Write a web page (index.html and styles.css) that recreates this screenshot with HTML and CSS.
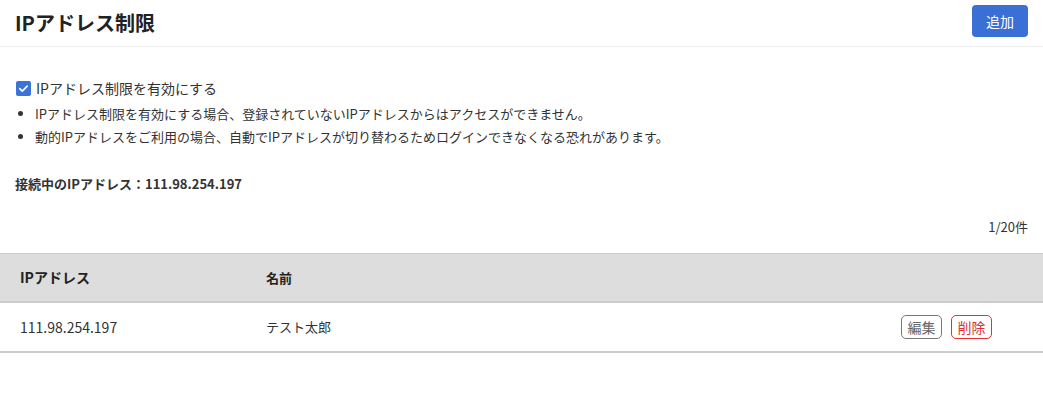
FILE: index.html
```html
<!DOCTYPE html>
<html lang="ja">
<head>
<meta charset="utf-8">
<link rel="stylesheet" href="styles.css">
</head>
<body>
<header class="page-header">
  <h1 class="title">IPアドレス制限</h1>
  <button class="btn-primary">追加</button>
</header>
<section class="settings">
  <label class="check">
    <span class="checkbox"><svg viewBox="0 0 16 16" width="15" height="15"><path d="M4 8.2l2.7 2.6L12 5.4" fill="none" stroke="#fff" stroke-width="1.8" stroke-linecap="round" stroke-linejoin="round"/></svg></span>
    <span>IPアドレス制限を有効にする</span>
  </label>
  <ul class="notes">
    <li>IPアドレス制限を有効にする場合、登録されていないIPアドレスからはアクセスができません。</li>
    <li>動的IPアドレスをご利用の場合、自動でIPアドレスが切り替わるためログインできなくなる恐れがあります。</li>
  </ul>
  <p class="current">接続中のIPアドレス：111.98.254.197</p>
  <div class="count">1/20件</div>
</section>
<table class="list">
  <thead>
    <tr><th class="c-ip">IPアドレス</th><th class="c-name">名前</th><th class="c-act"></th></tr>
  </thead>
  <tbody>
    <tr>
      <td class="c-ip">111.98.254.197</td>
      <td class="c-name">テスト太郎</td>
      <td class="c-act"><span class="actions"><button class="btn-edit">編集</button><button class="btn-del">削除</button></span></td>
    </tr>
  </tbody>
</table>
</body>
</html>
```
FILE: styles.css
```css
* { box-sizing: border-box; }
body {
  margin: 0;
  font-family: "Noto Sans CJK JP", "Noto Sans", sans-serif;
  color: #333;
  background: #fff;
}
.page-header {
  display: flex;
  align-items: center;
  justify-content: space-between;
  height: 47px;
  padding: 0 15px 0 15px;
  border-bottom: 1px solid #eee;
}
.title {
  margin: 0;
  font-size: 20px;
  font-weight: 700;
  color: #222;
  line-height: 1;
}
.btn-primary {
  width: 56px;
  height: 32px;
  margin-top: -4px;
  border: none;
  border-radius: 4px;
  background: #3a6fd5;
  color: #fff;
  font-family: inherit;
  font-size: 14px;
}
.settings {
  padding: 32px 15px 0 16px;
}
.check {
  display: flex;
  align-items: center;
  gap: 5px;
  font-size: 14px;
  line-height: 18px;
}
.checkbox {
  display: inline-flex;
  width: 15px;
  height: 15px;
  border-radius: 2px;
  background: #3b73d9;
}
.notes {
  margin: 5px 0 0;
  padding: 0 0 0 19px;
  font-size: 13px;
}
.notes li { height: 23px; line-height: 23px; }
.current {
  margin: 26px 0 0 -1px;
  font-size: 13px;
  font-weight: 700;
  line-height: 20px;
}
.count {
  margin-top: 23px;
  text-align: right;
  font-size: 13px;
  line-height: 20px;
}
.list {
  width: 100%;
  margin-top: 16px;
  border-collapse: collapse;
  font-size: 14px;
}
.list thead tr {
  background: #ddd;
  border-top: 1px solid #ccc;
  border-bottom: 2px solid #ccc;
}
.list th {
  height: 48px;
  text-align: left;
  font-weight: 700;
  color: #222;
  padding: 0;
}
.list td {
  height: 50px;
  padding: 0;
}
.list tbody tr { border-bottom: 2px solid #ccc; }
.c-ip { padding-left: 20px !important; width: 266px; }
.c-name { font-size: 13px; }
.c-act { text-align: right; padding-right: 51px !important; }
.actions { display: inline-flex; gap: 9px; vertical-align: middle; }
.btn-edit, .btn-del {
  display: inline-flex;
  align-items: center;
  height: 24px;
  padding: 0 5.5px;
  background: #fff;
  border-radius: 5px;
  font-family: inherit;
  font-size: 14px;
  line-height: 20px;
}
.btn-edit { border: 1px solid #777; color: #666; }
.btn-del { border: 1px solid #d33; color: #d33; }
```
